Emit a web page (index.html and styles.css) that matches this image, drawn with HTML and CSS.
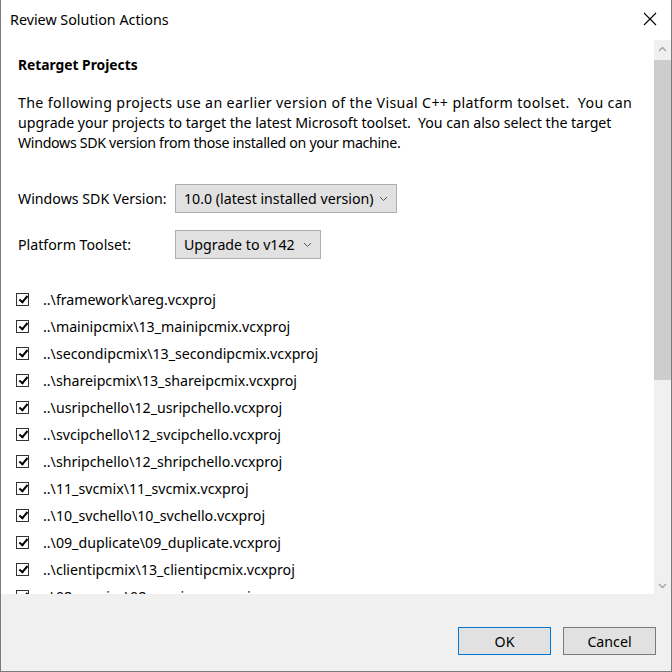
FILE: index.html
```html
<!DOCTYPE html>
<html>
<head>
<meta charset="utf-8">
<link rel="stylesheet" href="styles.css">
</head>
<body>
<div class="window">
  <div class="titlebar">
    <span class="title">Review Solution Actions</span>
    <svg class="close" width="14" height="14" viewBox="0 0 14 14"><path d="M1 1 L13 13 M13 1 L1 13" stroke="#000" stroke-width="1.1" fill="none"/></svg>
  </div>
  <div class="main">
    <div class="content">
      <h1 class="heading">Retarget Projects</h1>
      <p class="desc"><span class="l1">The following projects use an earlier version of the Visual C++ platform toolset.&nbsp; You can</span><br><span class="l2">upgrade your projects to target the latest Microsoft toolset.&nbsp; You can also select the target</span><br><span class="l3">Windows SDK version from those installed on your machine.</span></p>
      <div class="field field-first">
        <span class="label">Windows SDK Version:</span>
        <div class="combo combo-sdk"><span>10.0 (latest installed version)</span><svg width="9" height="6" viewBox="0 0 9 6"><path d="M1 1 L4.5 4.5 L8 1" stroke="#555" fill="none"/></svg></div>
      </div>
      <div class="field">
        <span class="label">Platform Toolset:</span>
        <div class="combo combo-tool"><span>Upgrade to v142</span><svg width="9" height="6" viewBox="0 0 9 6"><path d="M1 1 L4.5 4.5 L8 1" stroke="#555" fill="none"/></svg></div>
      </div>
      <ul class="list">
        <li><span class="cb"></span>..\framework\areg.vcxproj</li>
        <li><span class="cb"></span>..\mainipcmix\13_mainipcmix.vcxproj</li>
        <li><span class="cb"></span>..\secondipcmix\13_secondipcmix.vcxproj</li>
        <li><span class="cb"></span>..\shareipcmix\13_shareipcmix.vcxproj</li>
        <li><span class="cb"></span>..\usripchello\12_usripchello.vcxproj</li>
        <li><span class="cb"></span>..\svcipchello\12_svcipchello.vcxproj</li>
        <li><span class="cb"></span>..\shripchello\12_shripchello.vcxproj</li>
        <li><span class="cb"></span>..\11_svcmix\11_svcmix.vcxproj</li>
        <li><span class="cb"></span>..\10_svchello\10_svchello.vcxproj</li>
        <li><span class="cb"></span>..\09_duplicate\09_duplicate.vcxproj</li>
        <li><span class="cb"></span>..\clientipcmix\13_clientipcmix.vcxproj</li>
        <li><span class="cb"></span>..\08_service\08_service.vcxproj</li>
      </ul>
    </div>
    <div class="scrollbar">
      <div class="sb-btn"><svg width="9" height="6" viewBox="0 0 9 6"><path d="M1 5 L4.5 1.5 L8 5" stroke="#a0a0a0" stroke-width="1.3" fill="none"/></svg></div>
      <div class="sb-track"><div class="sb-thumb"></div></div>
      <div class="sb-btn"><svg width="9" height="6" viewBox="0 0 9 6"><path d="M1 1 L4.5 4.5 L8 1" stroke="#a0a0a0" stroke-width="1.3" fill="none"/></svg></div>
    </div>
  </div>
  <div class="footer">
    <button class="btn btn-default">OK</button>
    <button class="btn">Cancel</button>
  </div>
</div>
</body>
</html>
```
FILE: styles.css
```css
html, body {
  margin: 0;
  padding: 0;
  background: #fff;
}
body {
  font-family: "Noto Sans", "Open Sans", sans-serif;
  color: #000;
}
.window {
  box-sizing: border-box;
  width: 672px;
  height: 672px;
  border: 1px solid #7a7a7a;
  border-top: none;
  display: flex;
  flex-direction: column;
}
.titlebar {
  height: 40px;
  flex: none;
  display: flex;
  align-items: center;
  justify-content: space-between;
  padding: 0 14px 0 9px;
  background: #fff;
}
.title {
  font-size: 14.3px;
  margin-top: -1px;
}
.close {
  margin-top: -2px;
}
.main {
  height: 554px;
  flex: none;
  display: flex;
}
.content {
  flex: 1;
  overflow: hidden;
  padding: 0 0 0 17px;
}
.heading {
  font-size: 13.8px;
  font-weight: bold;
  margin: 15px 0 0;
  line-height: 20px;
}
.desc {
  font-size: 14.2px;
  line-height: 20px;
  margin: 18px 0 0;
  white-space: nowrap;
}
.l1 { letter-spacing: 0.35px; }
.l2 { letter-spacing: -0.04px; }
.l3 { letter-spacing: -0.32px; }
.field {
  display: flex;
  align-items: center;
  font-size: 14.2px;
}
.field-first {
  margin-top: 31px;
}
.field + .field {
  margin-top: 17px;
}
.label {
  width: 157px;
  flex: none;
}
.combo {
  box-sizing: border-box;
  height: 29px;
  background: #e1e1e1;
  border: 1px solid #adadad;
  display: flex;
  align-items: center;
  justify-content: space-between;
  padding: 0 8px 0 8px;
}
.combo-sdk { width: 222px; }
.combo-tool { width: 146px; }
.list {
  list-style: none;
  margin: 27px 0 0;
  padding: 0;
  font-size: 14.2px;
}
.list li {
  height: 27px;
  display: flex;
  align-items: center;
}
.cb {
  box-sizing: border-box;
  width: 13px;
  height: 13px;
  border: 1px solid #333;
  margin: 0 14px 0 -2px;
  position: relative;
  flex: none;
}
.cb::after {
  content: "";
  position: absolute;
  left: 3.5px;
  top: 0px;
  width: 3px;
  height: 7px;
  border: solid #000;
  border-width: 0 2px 2px 0;
  transform: rotate(40deg);
}
.scrollbar {
  width: 17px;
  flex: none;
  background: #f0f0f0;
  display: flex;
  flex-direction: column;
}
.sb-btn {
  height: 17px;
  display: flex;
  align-items: center;
  justify-content: center;
  flex: none;
}
.sb-track {
  flex: 1;
  padding-top: 3px;
}
.sb-thumb {
  height: 320px;
  background: #cdcdcd;
}
.footer {
  flex: 1;
  background: #f0f0f0;
  display: flex;
  justify-content: flex-end;
  align-items: flex-start;
  gap: 12px;
  padding: 33px 15px 0 0;
}
.btn {
  box-sizing: border-box;
  width: 93px;
  height: 28px;
  background: #e1e1e1;
  border: 1px solid #7a7a7a;
  font-family: inherit;
  font-size: 14.2px;
  color: #000;
  padding: 0;
  margin: 0;
}
.btn-default {
  border: 1px solid #0078d7;
}
```
